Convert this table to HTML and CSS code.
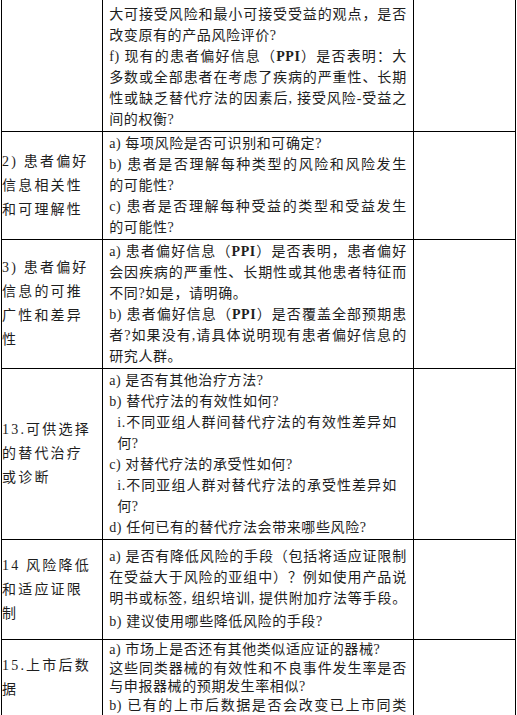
FILE: index.html
```html
<!DOCTYPE html>
<html lang="zh-CN">
<head>
<meta charset="utf-8">
<title>风险受益评估问题表</title>
<link rel="stylesheet" href="styles.css">
</head>
<body>
<table class="sheet">
  <colgroup>
    <col class="c-topic">
    <col class="c-question">
    <col class="c-note">
  </colgroup>
  <tbody>
    <tr class="row-first">
      <td class="topic"></td>
      <td class="question">
        <div class="ln">大可接受风险和最小可接受受益的观点，是否</div>
        <div class="ln end">改变原有的产品风险评价?</div>
        <div class="ln">f) 现有的患者偏好信息（<b>PPI</b>）是否表明：大</div>
        <div class="ln">多数或全部患者在考虑了疾病的严重性、长期</div>
        <div class="ln">性或缺乏替代疗法的因素后, 接受风险-受益之</div>
        <div class="ln end">间的权衡?</div>
      </td>
      <td class="note"></td>
    </tr>
    <tr>
      <td class="topic">2) 患者偏好<br>信息相关性<br>和可理解性</td>
      <td class="question">
        <div class="ln end">a) 每项风险是否可识别和可确定?</div>
        <div class="ln">b) 患者是否理解每种类型的风险和风险发生</div>
        <div class="ln end">的可能性?</div>
        <div class="ln">c) 患者是否理解每种受益的类型和受益发生</div>
        <div class="ln end">的可能性?</div>
      </td>
      <td class="note"></td>
    </tr>
    <tr>
      <td class="topic">3) 患者偏好<br>信息的可推<br>广性和差异<br>性</td>
      <td class="question">
        <div class="ln">a) 患者偏好信息（<b>PPI</b>）是否表明，患者偏好</div>
        <div class="ln">会因疾病的严重性、长期性或其他患者特征而</div>
        <div class="ln end">不同?如是，请明确。</div>
        <div class="ln">b) 患者偏好信息（<b>PPI</b>）是否覆盖全部预期患</div>
        <div class="ln">者?如果没有,请具体说明现有患者偏好信息的</div>
        <div class="ln end">研究人群。</div>
      </td>
      <td class="note"></td>
    </tr>
    <tr>
      <td class="topic">13.可供选择<br>的替代治疗<br>或诊断</td>
      <td class="question">
        <div class="ln end">a) 是否有其他治疗方法?</div>
        <div class="ln end">b) 替代疗法的有效性如何?</div>
        <div class="ln sub">i.不同亚组人群间替代疗法的有效性差异如</div>
        <div class="ln sub end">何?</div>
        <div class="ln end">c) 对替代疗法的承受性如何?</div>
        <div class="ln sub">i.不同亚组人群对替代疗法的承受性差异如</div>
        <div class="ln sub end">何?</div>
        <div class="ln end">d) 任何已有的替代疗法会带来哪些风险?</div>
      </td>
      <td class="note"></td>
    </tr>
    <tr class="row-spaced">
      <td class="topic">14 风险降低<br>和适应证限<br>制</td>
      <td class="question">
        <div class="ln">a) 是否有降低风险的手段（包括将适应证限制</div>
        <div class="ln">在受益大于风险的亚组中）？例如使用产品说</div>
        <div class="ln">明书或标签, 组织培训, 提供附加疗法等手段。</div>
        <div class="ln end para">b) 建议使用哪些降低风险的手段?</div>
      </td>
      <td class="note"></td>
    </tr>
    <tr class="row-tight">
      <td class="topic">15.上市后数<br>据</td>
      <td class="question">
        <div class="ln end">a) 市场上是否还有其他类似适应证的器械?</div>
        <div class="ln">这些同类器械的有效性和不良事件发生率是否</div>
        <div class="ln end">与申报器械的预期发生率相似?</div>
        <div class="ln">b) 已有的上市后数据是否会改变已上市同类</div>
      </td>
      <td class="note"></td>
    </tr>
  </tbody>
</table>
</body>
</html>
```
FILE: styles.css
```css
html, body {
  margin: 0;
  padding: 0;
  background: #ffffff;
}

body {
  font-family: "Liberation Serif", "Noto Sans CJK SC", serif;
  color: #1e1e1e;
  font-size: 14px;
}

.sheet {
  border-collapse: collapse;
  table-layout: fixed;
  width: 515px;
  margin-left: 1px;
}

.c-topic { width: 101px; }
.c-question { width: 310px; }
.c-note { width: 102px; }

.sheet td {
  border: 1px solid #000000;
  padding: 0;
}

.row-first td {
  border-top: none;
  padding-top: 4px;
}

.topic {
  vertical-align: middle;
  padding: 0 0 0 2px;
  line-height: 24px;
  letter-spacing: 2.2px;
  white-space: nowrap;
}

.sheet td.question {
  vertical-align: top;
  padding: 1px 6px 1px 6px;
  line-height: 21px;
  letter-spacing: 0.6px;
}

.row-first td.question {
  padding-top: 4px;
}

.ln {
  text-align: justify;
  text-align-last: justify;
}

.ln.end {
  text-align-last: left;
}

.ln.sub {
  padding-left: 8px;
  padding-right: 10px;
}

.ln b {
  font-weight: bold;
}

.row-spaced td.question {
  padding-top: 6px;
  padding-bottom: 7px;
}

.para {
  margin-top: 2px;
}

.sheet .row-tight td.question {
  padding-top: 1px;
  padding-bottom: 0;
  line-height: 18.5px;
}

.note {
  vertical-align: top;
}
```
